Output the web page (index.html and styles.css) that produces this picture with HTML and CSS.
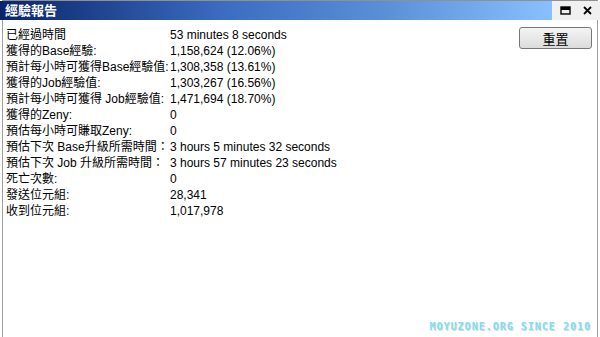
FILE: index.html
```html
<!DOCTYPE html>
<html lang="zh-Hant">

<head>
    <meta charset="UTF-8">
    <title>經驗報告</title>
    <link rel="stylesheet" href="styles.css">
</head>

<body>
    <div class="window">
        <div class="titlebar">
            <div class="title">經驗報告</div>
            <div class="controls">
                <svg width="11" height="11" viewBox="0 0 11 11">
                    <rect x="1" y="2" width="9" height="7" fill="none" stroke="#000" stroke-width="1.4"/>
                    <rect x="1" y="2" width="9" height="3" fill="#000"/>
                </svg>
                <svg width="11" height="11" viewBox="0 0 11 11">
                    <path d="M2 2 L9 9 M9 2 L2 9" stroke="#000" stroke-width="1.8"/>
                </svg>
            </div>
        </div>

        <div class="content">
            <div class="stats">
                <span>已經過時間</span><span>53 minutes 8 seconds</span>
                <span>獲得的Base經驗:</span><span>1,158,624 (12.06%)</span>
                <span>預計每小時可獲得Base經驗值:</span><span>1,308,358 (13.61%)</span>
                <span>獲得的Job經驗值:</span><span>1,303,267 (16.56%)</span>
                <span>預計每小時可獲得 Job經驗值:</span><span>1,471,694 (18.70%)</span>
                <span>獲得的Zeny:</span><span>0</span>
                <span>預估每小時可賺取Zeny:</span><span>0</span>
                <span>預估下次 Base升級所需時間：</span><span>3 hours 5 minutes 32 seconds</span>
                <span>預估下次 Job 升級所需時間：</span><span>3 hours 57 minutes 23 seconds</span>
                <span>死亡次數:</span><span>0</span>
                <span>發送位元組:</span><span>28,341</span>
                <span>收到位元組:</span><span>1,017,978</span>
            </div>
            <button class="reset">重置</button>
        </div>

        <div class="watermark">MOYUZONE.ORG SINCE 2010</div>
    </div>
</body>

</html>
```

FILE: styles.css
```css
body {
    margin: 0;
    font-family: 'Liberation Sans', 'Noto Sans CJK TC', sans-serif;
    font-size: 12px;
    background: #fff;
}

.window {
    height: 337px;
    border-top: 1px solid #909090;
    border-left: 1px solid #a0a0a0;
    border-right: 1px solid #a0a0a0;
    margin: 0 2px;
    box-sizing: border-box;
    display: flex;
    flex-direction: column;
    position: relative;
}

.titlebar {
    height: 19px;
    display: flex;
    align-items: stretch;
    margin: 0 -3px;
}

.title {
    flex: 1;
    background: linear-gradient(to right, #0a246a, #3a6cc0 40%, #5a90d8 70%, #88c0ff);
    color: #fff;
    font-weight: bold;
    font-size: 13px;
    padding-left: 5px;
    line-height: 19px;
}

.controls {
    width: 44px;
    background: #f0f0f0;
    display: flex;
    align-items: center;
    justify-content: space-around;
    padding: 0 2px;
}

.content {
    display: flex;
    justify-content: space-between;
    padding: 7px 5px 0 3px;
}

.stats {
    display: grid;
    grid-template-columns: 164px auto;
    line-height: 16px;
    color: #000;
}

.reset {
    width: 73px;
    height: 22px;
    margin-top: 0;
    font-family: 'Noto Sans CJK TC', sans-serif;
    font-size: 13px;
    background: linear-gradient(#f4f4f4, #dcdcdc);
    border: 1px solid #777;
    border-radius: 3px;
    padding: 0;
}

.watermark {
    position: absolute;
    right: 6px;
    bottom: 5px;
    font-family: 'DejaVu Sans Mono', monospace;
    font-weight: bold;
    font-size: 10px;
    letter-spacing: 1px;
    color: #7fe0f4;
    text-shadow: 1px 1px 0 #d8d8d8;
}
```
